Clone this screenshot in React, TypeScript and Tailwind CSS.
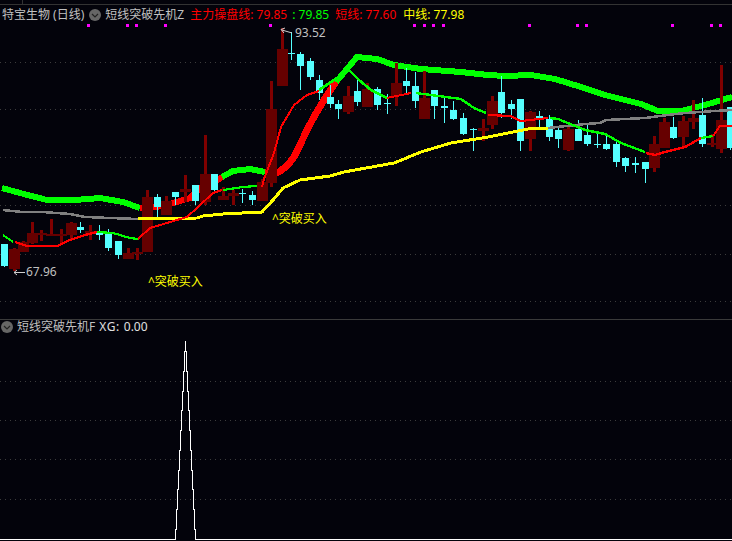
const CANDLES: [number, number, number, number, number, 0 | 1][] = [
  [4, 244, 266, 244, 267, 1], [14, 249, 269, 248, 271, 0], [23, 242, 252, 241, 252, 0], [32, 233, 243, 222, 244, 0],
  [41, 233, 234, 230, 241, 0], [51, 234, 235, 219, 235, 0], [61, 234, 235, 229, 244, 0], [71, 223, 235, 222, 240, 0],
  [80, 227, 230, 222, 233, 1], [90, 231, 234, 225, 240, 0], [99, 232, 235, 225, 240, 1], [108, 234, 248, 229, 251, 1],
  [118, 241, 255, 241, 259, 1], [128, 253, 259, 248, 259, 0], [137, 252, 253, 248, 260, 0], [147, 197, 252, 190, 252, 0],
  [157, 197, 207, 194, 218, 1], [166, 201, 215, 196, 215, 0], [175, 192, 197, 192, 205, 1], [185, 189, 192, 175, 202, 0],
  [195, 185, 201, 185, 205, 1], [205, 174, 202, 135, 205, 0], [214, 174, 190, 174, 194, 1], [223, 196, 200, 187, 200, 0],
  [233, 193, 196, 190, 205, 0], [242, 193, 194, 189, 203, 1], [252, 195, 200, 191, 205, 1], [262, 182, 201, 179, 201, 0],
  [271, 109, 183, 81, 187, 0], [282, 49, 86, 28, 86, 0], [291, 53, 54, 32, 60, 1], [300, 54, 66, 52, 90, 1],
  [310, 61, 77, 58, 80, 1], [319, 80, 93, 75, 100, 1], [330, 97, 104, 85, 108, 1], [338, 104, 109, 100, 119, 1],
  [348, 96, 112, 86, 114, 0], [357, 91, 102, 80, 106, 1], [367, 89, 107, 83, 107, 0], [377, 89, 105, 87, 110, 1],
  [387, 103, 104, 94, 114, 1], [396, 83, 96, 63, 106, 0], [406, 81, 86, 68, 94, 1], [415, 86, 101, 72, 108, 1],
  [424, 98, 119, 71, 119, 0], [434, 90, 106, 90, 119, 1], [444, 106, 108, 98, 123, 1], [453, 110, 119, 101, 120, 1],
  [463, 118, 134, 113, 135, 1], [473, 129, 130, 128, 151, 1], [483, 128, 131, 119, 141, 0], [492, 101, 125, 96, 129, 0],
  [501, 92, 113, 76, 118, 1], [511, 104, 109, 100, 119, 1], [520, 99, 141, 99, 151, 1], [530, 112, 139, 111, 151, 0],
  [539, 116, 118, 111, 129, 1], [549, 119, 137, 115, 141, 1], [558, 130, 139, 126, 148, 1], [568, 129, 150, 127, 151, 0],
  [578, 129, 141, 120, 141, 1], [587, 135, 144, 125, 146, 1], [597, 144, 145, 133, 148, 1], [606, 144, 149, 136, 150, 1],
  [616, 144, 162, 140, 167, 1], [625, 158, 166, 157, 172, 1], [635, 163, 165, 157, 173, 1], [645, 162, 169, 162, 183, 1],
  [654, 144, 168, 136, 172, 0], [664, 122, 148, 118, 148, 0], [673, 127, 138, 117, 139, 1], [683, 121, 137, 116, 148, 0],
  [693, 118, 122, 100, 129, 0], [702, 115, 144, 98, 147, 1], [712, 143, 145, 134, 147, 0], [721, 120, 149, 65, 153, 0],
  [730, 107, 148, 107, 150, 1],
];

const THICK_LINES: [string, string, number][] = [
  ["#00ff00", "2,188 20,193 47,200 75,200 100,198 123,202 140,208", 6],
  ["#ff0000", "140,208 165,206 173,203 190,198 200,188 215,182 222,177", 6],
  ["#00ff00", "222,177 233,171 250,169 265,172", 6],
  ["#ff0000", "265,173 279,172 287,166 294,157 300,145 307,130 315,115 324,100 337,80", 7],
  ["#00ff00", "336,82 357,57 377,59 394,65 421,69 461,72 488,75 505,76 531,75 555,79 581,87 605,95 641,104 658,111 681,111 705,105 732,97", 6],
];

const THIN_LINES: [string, string, number][] = [
  ["#00ff00", "3,235 13,242", 2],
  ["#ff0000", "15,242 27,246 57,246 70,240 85,235 97,232", 2.2],
  ["#00ff00", "97,232 113,233 130,238 138,239", 2.2],
  ["#ff0000", "138,239 150,228 167,223 187,217 198,207 213,193 222,190", 2],
  ["#00ff00", "223,190 243,187 257,186", 2.2],
  ["#ff0000", "262,187 264,179 274,153 281,127 294,105 307,95 319,91", 2],
  ["#00ff00", "319,90 337,78 349,70 359,80 371,90 387,98", 2.6],
  ["#ff0000", "387,98 411,93", 2],
  ["#00ff00", "416,93 431,95 461,99 474,108 486,113", 2.4],
  ["#ff0000", "488,115 511,116 518,120 521,121 548,118", 2.2],
  ["#00ff00", "550,118 558,119 585,130 605,134 621,143 645,152", 2.4],
  ["#ff0000", "646,153 655,155 665,152 685,147 701,138", 2.4],
  ["#00ff00", "701,138 713,136", 2.2],
  ["#ff0000", "713,136 720,126 732,126", 2],
];

const DOTS = [88, 127, 136, 165, 270, 414, 424, 433, 443, 529, 577, 586, 672, 711, 720];
const GRID_TOP = [62, 109, 157, 205, 254, 301];
const GRID_BOTTOM = [61, 100, 139, 179];

const SPIKE =
  "0,219.5 175.5,219.5 175.5,209 176.5,209 176.5,189 177.5,189 177.5,169 178.5,169 178.5,150 179.5,150 179.5,130 180.5,130 180.5,110 181.5,110 181.5,90 182.5,90 182.5,71 183.5,71 183.5,51 184.5,51 184.5,31 185.5,31 185.5,21 185.5,31 186.5,31 186.5,51 187.5,51 187.5,71 188.5,71 188.5,90 189.5,90 189.5,110 190.5,110 190.5,130 191.5,130 191.5,150 192.5,150 192.5,169 193.5,169 193.5,189 194.5,189 194.5,209 195.5,209 195.5,219.5 732,219.5";

function Chevron() {
  return (
    <svg width="12" height="12" viewBox="0 0 12 12" className="shrink-0">
      <circle cx="6" cy="6" r="6" fill="#666666" />
      <path d="M3 5 L6 8 L9 5" fill="none" stroke="#222222" strokeWidth="1.2" />
    </svg>
  );
}

export default function App() {
  return (
    <div
      className="flex h-[541px] w-[732px] flex-col overflow-hidden bg-[#03030b] text-[12px] leading-[14px]"
      style={{ fontFamily: '"Noto Sans", "Noto Sans CJK SC", sans-serif' }}
    >
      <div className="relative h-[320px] shrink-0 border-b border-[#3a3a3a]">
        <svg width="732" height="320" className="absolute left-0 top-0">
          <line x1="0" x2="732" y1="4.5" y2="4.5" stroke="#333333" />
          <line x1="22.5" x2="22.5" y1="0" y2="4" stroke="#333333" />
          {GRID_TOP.map((y) => (
            <line key={y} x1="0" x2="732" y1={y + 0.5} y2={y + 0.5} stroke="#3c3c3c" strokeDasharray="1 4" />
          ))}
          {DOTS.map((x) => (
            <rect key={x} x={x - 1} y="24" width="3" height="3" fill="#ff00ff" />
          ))}
          <g shapeRendering="crispEdges" fill="none" strokeLinejoin="round">
            {THICK_LINES.map(([c, p, w]) => (
              <polyline key={p} points={p} stroke={c} strokeWidth={w} />
            ))}
          </g>
          <g shapeRendering="crispEdges">
            {CANDLES.map(([x, t, b, wt, wb, up]) =>
              up ? (
                <g key={x}>
                  <rect x={x} y={wt} width="1" height={wb - wt} fill="#55ffff" />
                  <rect x={x - 3} y={t} width="7" height={Math.max(b - t, 1)} fill="#55ffff" />
                </g>
              ) : (
                <g key={x}>
                  <rect x={x - 1} y={wt} width="3" height={wb - wt} fill="#7f0000" />
                  <rect x={x - 5} y={t} width="11" height={Math.max(b - t, 2)} fill="#660000" />
                </g>
              )
            )}
          </g>
          <g shapeRendering="crispEdges" fill="none">
            <polyline
              points="3,210 22,212 42,212 70,214 85,217 110,218 138,219"
              stroke="#808080"
              strokeWidth="2.5"
            />
            <polyline
              points="548,128 585,124 600,123 606,120 645,118 668,115 685,113 715,111 732,110"
              stroke="#808080"
              strokeWidth="2.5"
            />
            <polyline
              points="138,219 197,218 203,216 223,214 262,212 273,200 283,188 300,180 330,176 344,172 394,163 421,152 451,143 488,137 508,133 528,129 548,128"
              stroke="#ffff00"
              strokeWidth="3"
            />
            {THIN_LINES.map(([c, p, w]) => (
              <polyline key={p} points={p} stroke={c} strokeWidth={w} />
            ))}
          </g>
          <path d="M292 33 L282 30 M285 28 L281 29.5 L284 33" stroke="#d0d0d0" fill="none" />
          <path d="M25 272.5 L14 272.5 M17 270 L14 272.5 L17 275" stroke="#d0d0d0" fill="none" />
        </svg>

        <div className="relative flex h-[28px] items-center whitespace-nowrap pl-[2px] pt-[1px]">
          <span className="text-[#c0c0c0]">特宝生物 (日线)</span>
          <span className="ml-[5px]">
            <Chevron />
          </span>
          <span className="ml-[4px] text-[#c0c0c0]">短线突破先机Z</span>
          <span className="ml-[6px] text-[#ff0000]">主力操盘线: 79.85</span>
          <span className="ml-[5px] text-[#00ff00]">: 79.85</span>
          <span className="ml-[6px] text-[#ff0000]">短线: 77.60</span>
          <span className="ml-[7px] text-[#ffff00]">中线: 77.98</span>
        </div>

        <span className="absolute left-[295px] top-[26px] text-[#c0c0c0]">93.52</span>
        <span className="absolute left-[26px] top-[265px] text-[#c0c0c0]">67.96</span>
        <span className="absolute left-[148px] top-[275px] text-[#ffff00]">^突破买入</span>
        <span className="absolute left-[272px] top-[212px] text-[#ffff00]">^突破买入</span>
      </div>

      <div className="relative flex-1">
        <svg width="732" height="221" className="absolute left-0 top-0">
          {GRID_BOTTOM.map((y) => (
            <line key={y} x1="0" x2="732" y1={y + 0.5} y2={y + 0.5} stroke="#3c3c3c" strokeDasharray="1 4" />
          ))}
          <polyline points={SPIKE} fill="none" stroke="#ffffff" shapeRendering="crispEdges" />
        </svg>
        <div className="relative flex h-[14px] items-center whitespace-nowrap pl-[1px]">
          <Chevron />
          <span className="ml-[4px] text-[#c0c0c0]">短线突破先机F</span>
          <span className="ml-[4px] tracking-[0.6px] text-[#e0e0e0]">XG:</span>
          <span className="ml-[4px] text-[#e0e0e0]">0.00</span>
        </div>
      </div>
    </div>
  );
}
